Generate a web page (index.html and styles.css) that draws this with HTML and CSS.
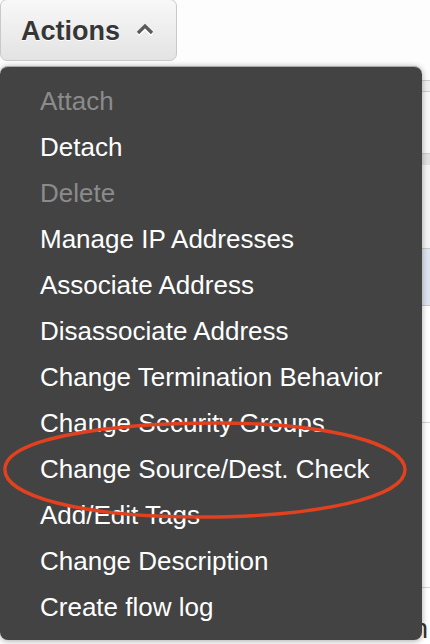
FILE: index.html
```html
<!DOCTYPE html>
<html>
<head>
<meta charset="utf-8">
<link rel="stylesheet" href="styles.css">
</head>
<body>
<div class="page">
  <div class="toolbar">
    <button class="btn">
      <span class="btn-label">Actions</span>
      <svg class="caret" width="20" height="14" viewBox="0 0 20 14">
        <polyline points="3,12 10,5 17,12" fill="none" stroke="#fff" stroke-width="3.2" transform="translate(0,1)"/>
        <polyline points="3,11 10,4 17,11" fill="none" stroke="#5a5a5a" stroke-width="3.2"/>
      </svg>
    </button>
  </div>
  <div class="table">
    <div class="spacer"></div>
    <div class="row hdr"></div>
    <div class="row r1"></div>
    <div class="row r2"></div>
    <div class="row r3"></div>
    <div class="row sel"></div>
    <div class="row r4"></div>
    <div class="row r5"></div>
    <div class="row r6"><span class="cell">Location</span></div>
  </div>

  <ul class="menu">
    <li class="item disabled">Attach</li>
    <li class="item">Detach</li>
    <li class="item disabled">Delete</li>
    <li class="item">Manage IP Addresses</li>
    <li class="item">Associate Address</li>
    <li class="item">Disassociate Address</li>
    <li class="item">Change Termination Behavior</li>
    <li class="item">Change Security Groups</li>
    <li class="item">Change Source/Dest. Check</li>
    <li class="item">Add/Edit Tags</li>
    <li class="item">Change Description</li>
    <li class="item">Create flow log</li>
  </ul>

  <svg class="annotation" width="430" height="644" viewBox="0 0 430 644">
    <path d="M5,468 C8,438 110,423 217,423 C330,423 405,444 405,470 C405,497 318,517 200,517 C82,517 2,496 5,468 Z" fill="none" stroke="#e2411f" stroke-width="3.4"/>
  </svg>
</div>
</body>
</html>
```

FILE: styles.css
```css
html, body {
  margin: 0;
  padding: 0;
  background: #ffffff;
}

body {
  font-family: "Liberation Sans", Arial, sans-serif;
  width: 430px;
  height: 644px;
  overflow: hidden;
}

.page {
  position: relative;
  width: 430px;
  height: 644px;
  overflow: hidden;
  background: #fdfdfd;
}

.toolbar {
  height: 66px;
  display: flex;
  align-items: flex-start;
}

.btn {
  margin-top: -1px;
  width: 177px;
  height: 62px;
  box-sizing: border-box;
  border: 1px solid #c9c9c9;
  border-radius: 7px;
  background: linear-gradient(#f8f8f8, #e3e3e3);
  display: flex;
  align-items: center;
  padding: 2px 0 0 20px;
  gap: 15px;
  font-family: "Liberation Sans", Arial, sans-serif;
  cursor: pointer;
}

.btn-label {
  font-size: 27px;
  font-weight: bold;
  color: #363636;
  text-shadow: 0 1px 0 #ffffff;
  line-height: 31px;
}

.caret {
  display: block;
  margin-top: -5px;
}

.table {
  display: flex;
  flex-direction: column;
}

.spacer {
  height: 14px;
}

.row {
  box-sizing: border-box;
}

.hdr {
  height: 12px;
  background: #f0f0f0;
  border-top: 1px solid #cdcdcd;
  border-bottom: 1px solid #cdcdcd;
}

.r1 {
  height: 61px;
  background: #f8f8f8;
}

.r2 {
  height: 12px;
  background: #e2e2e2;
  border-top: 1px solid #cfcfcf;
}

.r3 {
  height: 83px;
  background: #f5f5f5;
}

.sel {
  height: 58px;
  background: #dfe5f0;
  border-top: 1px solid #c9c9c9;
  border-bottom: 1px solid #c9c9c9;
}

.r4 {
  height: 116px;
  background: #ffffff;
}

.r5 {
  height: 165px;
  background: #ffffff;
  border-top: 1px solid #d6d6d6;
}

.r6 {
  height: 60px;
  background: #ffffff;
  border-top: 1px solid #d6d6d6;
  display: flex;
  justify-content: flex-end;
  align-items: flex-start;
  padding: 26px 2px 0 0;
}

.cell {
  font-size: 27px;
  line-height: 31px;
  color: #333333;
}

.menu {
  position: absolute;
  top: 66px;
  left: 0;
  width: 422px;
  height: 574px;
  box-sizing: border-box;
  margin: 0;
  list-style: none;
  padding: 11px 0 0 0;
  background: #434343;
  border-top: 1px solid #a9a9a9;
  border-radius: 8px;
  box-shadow: 0 1px 6px rgba(0, 0, 0, 0.35);
}

.item {
  height: 46px;
  line-height: 46px;
  padding-left: 40px;
  font-size: 26px;
  color: #ffffff;
  white-space: nowrap;
}

.item.disabled {
  color: #8b8b8b;
}

.annotation {
  position: absolute;
  top: 0;
  left: 0;
  pointer-events: none;
}
```
